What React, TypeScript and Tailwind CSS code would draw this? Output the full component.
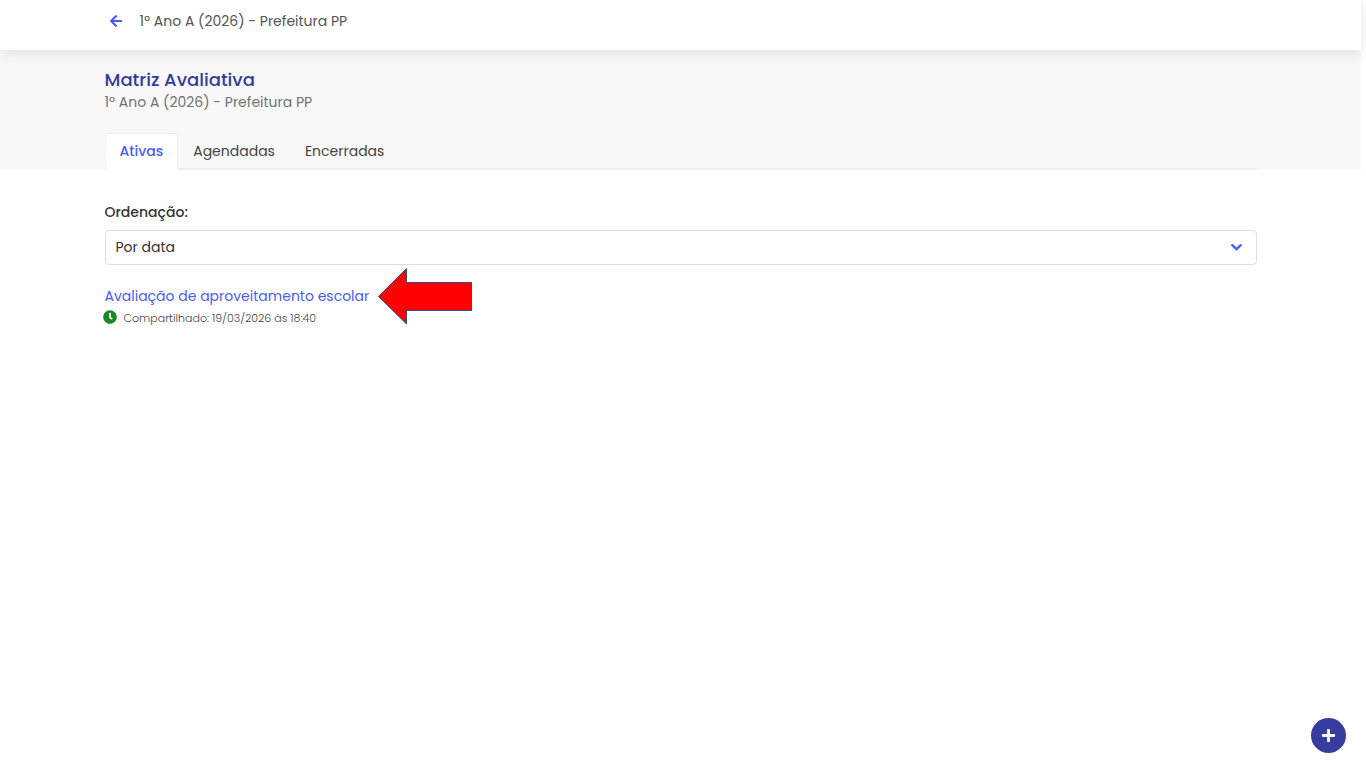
import React, { useState } from 'react';
import { FaArrowLeft, FaClock, FaPlus } from 'react-icons/fa';

const className = '1º Ano A (2026) - Prefeitura PP';

const tabs = ['Ativas', 'Agendadas', 'Encerradas'];

const assessments = [
  { title: 'Avaliação de aproveitamento escolar', shared: '19/03/2026 às 18:40' },
];

const Header: React.FC = () => (
  <header className="relative h-[50px] bg-white shadow-[0_2px_12px_rgba(51,61,120,0.14)]">
    <div className="max-w-6xl mx-auto flex items-center h-[42px] pl-1">
      <button type="button" aria-label="Voltar" className="text-[#4b5cf5] mr-[17px]">
        <FaArrowLeft className="w-[14px] h-[14px]" />
      </button>
      <span className="text-[14px] leading-5 text-[#555555]">{className}</span>
    </div>
  </header>
);

const Chevron: React.FC = () => (
  <svg
    className="absolute right-[14px] top-[13px] w-[13px] h-[9px] text-[#4b5cf5] pointer-events-none"
    viewBox="0 0 13 9"
    fill="none"
    stroke="currentColor"
    strokeWidth="2.4"
    strokeLinecap="round"
    strokeLinejoin="miter"
    aria-hidden="true"
  >
    <path d="M2.2 2.2 L6.5 6.2 L10.8 2.2" />
  </svg>
);

const RedArrow: React.FC = () => (
  <svg className="absolute left-[272px] -top-[19px] w-[96px] h-[58px]" viewBox="0 0 96 58" aria-hidden="true">
    <path d="M1.5 29.5 L29.5 1.5 V15.5 H95 V43.5 H29.5 V57 Z" fill="#ff0000" />
    <path d="M95 43.5 H29.5 V57 L1.5 29.5 L29.5 1.5 V15.5 H95" fill="none" stroke="#2f528f" strokeWidth="1" />
  </svg>
);

export default function App() {
  const [active, setActive] = useState('Ativas');

  return (
    <div className="min-h-screen overflow-x-clip bg-white pr-[5px] font-[Poppins,Inter,sans-serif]">
      <Header />

      {/* Title and tabs */}
      <div className="bg-[#f8f8f8] pt-5">
        <div className="max-w-6xl mx-auto">
          <h1 className="text-[18px] leading-5 font-medium text-[#333b9b]">Matriz Avaliativa</h1>
          <p className="mt-[2px] text-[14px] leading-5 text-[#737373]">{className}</p>
          <div role="tablist" className="flex mt-[21px] h-[37px] shadow-[inset_0_-2px_0_#eeeeee]">
            {tabs.map((tab) => (
              <button
                key={tab}
                type="button"
                role="tab"
                aria-selected={tab === active}
                onClick={() => setActive(tab)}
                className={
                  tab === active
                    ? 'px-[14px] pb-[2px] text-[14px] font-medium text-[#4b5cf5] bg-white border border-b-0 border-[#eeeeee] rounded-t'
                    : 'px-[15px] pb-[2px] text-[14px] text-[#444444] border-t border-transparent'
                }
              >
                {tab}
              </button>
            ))}
          </div>
        </div>
      </div>

      <main className="max-w-6xl mx-auto pt-8">
        <label htmlFor="order" className="block text-[14px] leading-5 font-medium text-[#333333]">
          Ordenação:
        </label>
        <div className="relative mt-2">
          <select
            id="order"
            className="appearance-none block w-full h-[35px] pl-[10px] pr-10 text-[14px] text-[#333333] bg-white border border-[#dedede] rounded"
          >
            <option>Por data</option>
            <option>Por nome</option>
          </select>
          <Chevron />
        </div>

        <ul className="mt-[21px]">
          {assessments.map((item) => (
            <li key={item.title} className="relative">
              <a href="#" className="text-[14px] leading-5 block w-fit text-[#4b5cf5]">{item.title}</a>
              <div className="flex items-start -ml-[2px] mt-1">
                <FaClock className="w-[14px] h-[14px] mr-[7px] text-[#178a25]" />
                <span className="text-[11px] leading-4 font-light text-[#444444]">Compartilhado: {item.shared}</span>
              </div>
              <RedArrow />
            </li>
          ))}
        </ul>
      </main>

      <button
        type="button"
        aria-label="Adicionar"
        className="fixed right-5 bottom-[15px] flex items-center justify-center w-[35px] h-[35px] rounded-full bg-[#363d9e] text-white"
      >
        <FaPlus className="w-[15px] h-[15px]" />
      </button>
    </div>
  );
}
